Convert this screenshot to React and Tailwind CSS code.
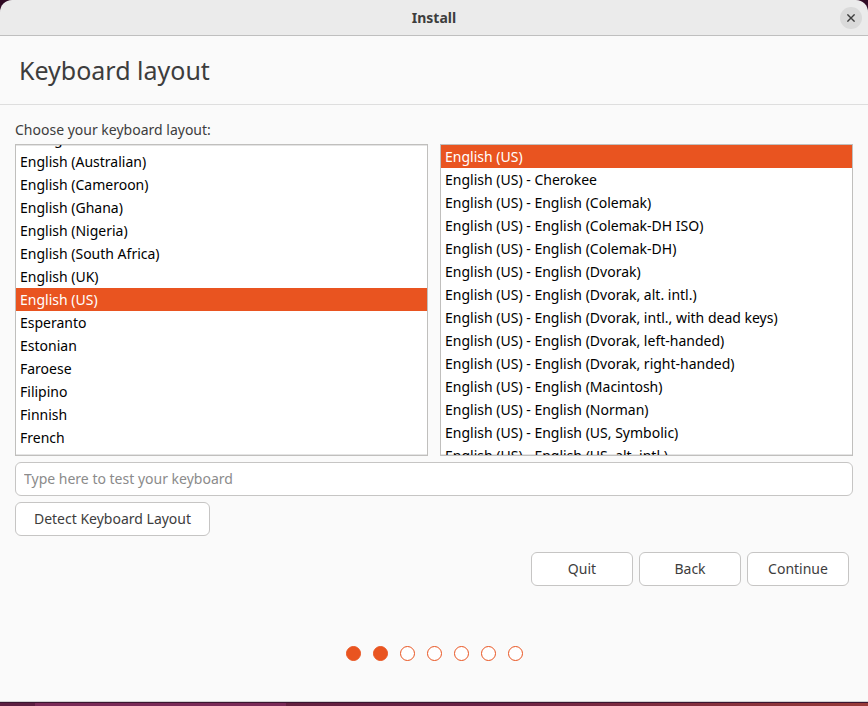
import { useLayoutEffect, useRef, useState } from "react";

const languages = [
  "Dzongkha",
  "English (Australian)",
  "English (Cameroon)",
  "English (Ghana)",
  "English (Nigeria)",
  "English (South Africa)",
  "English (UK)",
  "English (US)",
  "Esperanto",
  "Estonian",
  "Faroese",
  "Filipino",
  "Finnish",
  "French",
  "French (Canada)",
];

const variants = [
  "English (US)",
  "English (US) - Cherokee",
  "English (US) - English (Colemak)",
  "English (US) - English (Colemak-DH ISO)",
  "English (US) - English (Colemak-DH)",
  "English (US) - English (Dvorak)",
  "English (US) - English (Dvorak, alt. intl.)",
  "English (US) - English (Dvorak, intl., with dead keys)",
  "English (US) - English (Dvorak, left-handed)",
  "English (US) - English (Dvorak, right-handed)",
  "English (US) - English (Macintosh)",
  "English (US) - English (Norman)",
  "English (US) - English (US, Symbolic)",
  "English (US) - English (US, alt. intl.)",
];

function ListBox({ label, items, initial, scrollTop }) {
  const ref = useRef(null);
  const [selected, setSelected] = useState(initial);

  useLayoutEffect(() => {
    ref.current.scrollTop = scrollTop;
  }, [scrollTop]);

  function onKeyDown(e) {
    const step = e.key === "ArrowDown" ? 1 : e.key === "ArrowUp" ? -1 : 0;
    if (!step) return;
    e.preventDefault();
    const next = items.indexOf(selected) + step;
    if (items[next]) {
      setSelected(items[next]);
      ref.current.children[next].scrollIntoView({ block: "nearest" });
    }
  }

  return (
    <ul
      ref={ref}
      role="listbox"
      aria-label={label}
      tabIndex={0}
      onKeyDown={onKeyDown}
      className="h-[312px] min-w-0 flex-1 overflow-y-auto border border-[#c0bfbd] bg-white text-black shadow-[inset_0_1px_0_#e4e4e4,inset_0_-1px_0_#e4e4e4] outline-none [scrollbar-width:none]"
    >
      {items.map((item) => (
        <li
          key={item}
          role="option"
          aria-selected={item === selected}
          onClick={() => setSelected(item)}
          className="h-[23px] truncate px-1 leading-[23px] aria-selected:bg-[#e95420] aria-selected:text-white"
        >
          {item}
        </li>
      ))}
    </ul>
  );
}

function Button({ className, children }) {
  return (
    <button
      type="button"
      className={`h-[34px] rounded-md border border-[#c6c5c4] bg-white hover:bg-[#f7f7f7] ${className}`}
    >
      {children}
    </button>
  );
}

const steps = [true, true, false, false, false, false, false];

export default function App() {
  return (
    <div className="flex min-h-screen flex-col bg-[linear-gradient(to_right,#5c1e40_4%,#7a2a57_4%,#7a2a57_33%,#64203f_33%,#6b2145_55%,#983a38_100%)] font-['Noto_Sans','Open_Sans',sans-serif] text-sm text-[#3d3d3d]">
      <div className="bg-[#300a24]">
        <header className="grid h-9 grid-cols-[1fr_auto_1fr] items-center rounded-t-xl border-b border-[#bfbfbf] bg-[#ebebeb] px-1.5">
          <h1 className="col-start-2 font-bold">Install</h1>
          <button
            type="button"
            aria-label="Close"
            className="flex size-[22px] items-center justify-center justify-self-end rounded-full bg-[#dadada]"
          >
            <svg viewBox="0 0 8 8" className="size-2" fill="none" stroke="#3d3d3d" strokeWidth="1.4">
              <path d="M0.4 0.4 7.6 7.6M7.6 0.4 0.4 7.6" />
            </svg>
          </button>
        </header>
      </div>

      <main className="flex flex-1 flex-col border-b border-[#d0d0d0] bg-[#fafafa]">
        <h2 className="border-b border-[#dedede] px-[19px] py-4 text-[25px] leading-9">Keyboard layout</h2>

        <div className="flex flex-col gap-1.5 px-[15px] pt-[15px]">
          <div>
            <p className="pb-1">Choose your keyboard layout:</p>
            <div className="flex gap-3">
              <ListBox label="Keyboard language" items={languages} initial="English (US)" scrollTop={18} />
              <ListBox label="Keyboard variant" items={variants} initial="English (US)" scrollTop={0} />
            </div>
          </div>
          <input
            type="text"
            aria-label="Type here to test your keyboard"
            placeholder="Type here to test your keyboard"
            className="h-[34px] w-full rounded-md border border-[#c6c5c4] bg-white px-2 pb-0.5 outline-none placeholder:text-[#8b8b8b]"
          />
          <Button className="w-[195px]">Detect Keyboard Layout</Button>
        </div>

        <div className="flex justify-end gap-1.5 px-[19px] pt-4">
          <Button className="w-[102px]">Quit</Button>
          <Button className="w-[102px]">Back</Button>
          <Button className="w-[102px]">Continue</Button>
        </div>

        <ol aria-label="Progress" className="flex justify-center gap-3 pt-[60px] pb-10">
          {steps.map((done, i) => (
            <li
              key={i}
              className={`size-[15px] rounded-full border border-[#e95420] ${done ? "bg-[#e95420]" : "bg-white"}`}
            />
          ))}
        </ol>
      </main>
      <div className="h-1 border-t border-[#3a1530]" />
    </div>
  );
}
